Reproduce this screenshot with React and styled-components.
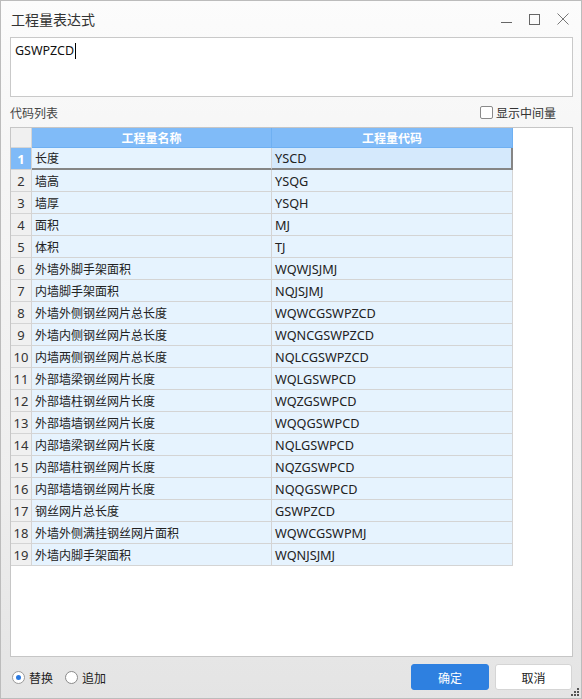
import React from "react";
import styled, { createGlobalStyle } from "styled-components";

const GlobalStyle = createGlobalStyle`
  html, body {
    margin: 0;
    padding: 0;
    background: #ffffff;
  }
  body {
    font-family: "Noto Sans", "Noto Sans CJK SC", sans-serif;
    color: #222;
  }
`;

const Window = styled.div`
  position: relative;
  box-sizing: border-box;
  width: 582px;
  height: 699px;
  border: 1px solid #bcbcbc;
  background: linear-gradient(180deg, #fcfcfc 0%, #f6f6f6 20%, #eeeeee 70%, #e4e4e4 100%);
  display: flex;
  flex-direction: column;
`;

const TitleBar = styled.div`
  height: 37px;
  display: flex;
  align-items: center;
  justify-content: space-between;
  padding: 0 12px 0 10px;
`;

const Title = styled.span`
  font-family: "Noto Sans CJK SC", sans-serif;
  font-size: 14px;
  color: #333;
`;

const Controls = styled.div`
  display: flex;
  align-items: center;
  gap: 17px;
`;

const Body = styled.div`
  flex: 1;
  display: flex;
  flex-direction: column;
  padding: 0 8px 0 9px;
`;

const Editor = styled.div`
  box-sizing: border-box;
  height: 60px;
  border: 1px solid #c9c9c9;
  background: #fff;
  padding: 5px 4px;
  font-size: 12.5px;
  line-height: 16px;
  color: #111;
  display: flex;
  align-items: flex-start;
`;

const Caret = styled.span`
  display: inline-block;
  width: 1px;
  height: 16px;
  margin-left: 1px;
  background: #000;
`;

const ListBar = styled.div`
  height: 30px;
  display: flex;
  align-items: center;
  justify-content: space-between;
  padding-right: 17px;
`;

const Label = styled.span`
  font-family: "Noto Sans CJK SC", sans-serif;
  font-size: 12px;
  color: #444;
`;

const Check = styled.label`
  display: flex;
  align-items: center;
  gap: 3px;
  font-family: "Noto Sans CJK SC", sans-serif;
  font-size: 12px;
  color: #333;
`;

const CheckBox = styled.span`
  box-sizing: border-box;
  width: 13px;
  height: 13px;
  border: 1px solid #8a8a8a;
  border-radius: 2px;
  background: #fff;
`;

const GridBox = styled.div`
  box-sizing: border-box;
  height: 530px;
  border: 1px solid #c6c6c6;
  background: #fff;
`;

const GridRow = styled.div`
  display: grid;
  grid-template-columns: 21px 240px 241px;
  height: ${({ head }) => (head ? "20px" : "22px")};
`;

const HeadCell = styled.div`
  box-sizing: border-box;
  border-right: 1px solid ${({ corner }) => (corner ? "#d6d6d6" : "#6fb0f2")};
  border-bottom: 1px solid ${({ corner }) => (corner ? "#d6d6d6" : "#6fb0f2")};
  background: ${({ corner }) => (corner ? "#f0f0f0" : "#80bbf8")};
  color: #fff;
  font-family: "Noto Sans CJK SC", sans-serif;
  font-weight: bold;
  font-size: 12px;
  display: flex;
  align-items: center;
  justify-content: center;
`;

const NumCell = styled.div`
  box-sizing: border-box;
  border-right: 1px solid #d4d4d4;
  border-bottom: 1px solid #d4d4d4;
  background: ${({ active }) => (active ? "#7fbaf7" : "#f0f0f0")};
  color: ${({ active }) => (active ? "#fff" : "#333")};
  font-weight: ${({ active }) => (active ? "bold" : "normal")};
  font-size: 13px;
  display: flex;
  align-items: center;
  justify-content: center;
`;

const Cell = styled.div`
  box-sizing: border-box;
  border-right: ${({ active, last }) => (active && last ? "2px solid #858585" : "1px solid #d4d4d4")};
  border-bottom: ${({ active }) => (active ? "2px solid #858585" : "1px solid #d4d4d4")};
  background: ${({ active, last }) => (active && last ? "#d5e9fc" : "#e6f3fe")};
  color: #222;
  font-family: "Noto Sans", "Noto Sans CJK SC", sans-serif;
  font-size: ${({ last }) => (last ? "12.7px" : "12px")};
  padding-left: ${({ last }) => (last ? "3px" : "3px")};
  display: flex;
  align-items: center;
  white-space: nowrap;
`;

const Footer = styled.div`
  height: 40px;
  display: flex;
  align-items: center;
  justify-content: space-between;
  padding-bottom: 1px;
`;

const RadioGroup = styled.div`
  display: flex;
  align-items: center;
  gap: 12px;
  padding-left: 2px;
`;

const Radio = styled.label`
  display: flex;
  align-items: center;
  gap: 4px;
  font-family: "Noto Sans CJK SC", sans-serif;
  font-size: 12px;
  color: #222;
`;

const RadioDot = styled.span`
  box-sizing: border-box;
  width: 13px;
  height: 13px;
  border-radius: 50%;
  border: 1px solid ${({ on }) => (on ? "#9a9a9a" : "#8a8a8a")};
  background: #fff;
  display: flex;
  align-items: center;
  justify-content: center;
  &::after {
    content: "";
    width: 5px;
    height: 5px;
    border-radius: 50%;
    background: ${({ on }) => (on ? "#2a79e0" : "transparent")};
  }
`;

const Buttons = styled.div`
  display: flex;
  gap: 6px;
  margin-right: 1px;
`;

const Button = styled.button`
  box-sizing: border-box;
  width: ${({ primary }) => (primary ? "78px" : "77px")};
  height: 26px;
  border-radius: 3px;
  border: 1px solid ${({ primary }) => (primary ? "#2e80e0" : "#d5d5d5")};
  background: ${({ primary }) => (primary ? "#2e80e0" : "#fff")};
  color: ${({ primary }) => (primary ? "#fff" : "#222")};
  font-family: "Noto Sans CJK SC", sans-serif;
  font-size: 12px;
  padding: 0;
`;

const Grip = styled.svg`
  position: absolute;
  right: 1px;
  bottom: 1px;
`;

const rows = [
  ["长度", "YSCD"],
  ["墙高", "YSQG"],
  ["墙厚", "YSQH"],
  ["面积", "MJ"],
  ["体积", "TJ"],
  ["外墙外脚手架面积", "WQWJSJMJ"],
  ["内墙脚手架面积", "NQJSJMJ"],
  ["外墙外侧钢丝网片总长度", "WQWCGSWPZCD"],
  ["外墙内侧钢丝网片总长度", "WQNCGSWPZCD"],
  ["内墙两侧钢丝网片总长度", "NQLCGSWPZCD"],
  ["外部墙梁钢丝网片长度", "WQLGSWPCD"],
  ["外部墙柱钢丝网片长度", "WQZGSWPCD"],
  ["外部墙墙钢丝网片长度", "WQQGSWPCD"],
  ["内部墙梁钢丝网片长度", "NQLGSWPCD"],
  ["内部墙柱钢丝网片长度", "NQZGSWPCD"],
  ["内部墙墙钢丝网片长度", "NQQGSWPCD"],
  ["钢丝网片总长度", "GSWPZCD"],
  ["外墙外侧满挂钢丝网片面积", "WQWCGSWPMJ"],
  ["外墙内脚手架面积", "WQNJSJMJ"],
];

const App = () => {
  return (
    <>
      <GlobalStyle />
      <Window>
        <TitleBar>
          <Title>工程量表达式</Title>
          <Controls>
            <svg width="11" height="11" viewBox="0 0 11 11">
              <line x1="0" y1="8.5" x2="11" y2="8.5" stroke="#666" strokeWidth="1" />
            </svg>
            <svg width="11" height="11" viewBox="0 0 11 11">
              <rect x="0.5" y="0.5" width="10" height="10" fill="none" stroke="#666" strokeWidth="1" />
            </svg>
            <svg width="12" height="12" viewBox="0 0 12 12">
              <path d="M0.5 0.5 L11.5 11.5 M11.5 0.5 L0.5 11.5" stroke="#777" strokeWidth="1" />
            </svg>
          </Controls>
        </TitleBar>
        <Body>
          <Editor>
            GSWPZCD
            <Caret />
          </Editor>
          <ListBar>
            <Label>代码列表</Label>
            <Check>
              <CheckBox />
              显示中间量
            </Check>
          </ListBar>
          <GridBox>
            <GridRow head>
              <HeadCell corner />
              <HeadCell>工程量名称</HeadCell>
              <HeadCell>工程量代码</HeadCell>
            </GridRow>
            {rows.map(([name, code], i) => (
              <GridRow key={code}>
                <NumCell active={i === 0}>{i + 1}</NumCell>
                <Cell active={i === 0}>{name}</Cell>
                <Cell active={i === 0} last>
                  {code}
                </Cell>
              </GridRow>
            ))}
          </GridBox>
          <Footer>
            <RadioGroup>
              <Radio>
                <RadioDot on />
                替换
              </Radio>
              <Radio>
                <RadioDot />
                追加
              </Radio>
            </RadioGroup>
            <Buttons>
              <Button primary>确定</Button>
              <Button>取消</Button>
            </Buttons>
          </Footer>
        </Body>
        <Grip width="10" height="10" viewBox="0 0 10 10">
          <rect x="7" y="1" width="2" height="2" fill="#555" />
          <rect x="4" y="4" width="2" height="2" fill="#555" />
          <rect x="7" y="4" width="2" height="2" fill="#555" />
          <rect x="1" y="7" width="2" height="2" fill="#555" />
          <rect x="4" y="7" width="2" height="2" fill="#555" />
          <rect x="7" y="7" width="2" height="2" fill="#555" />
        </Grip>
      </Window>
    </>
  );
};

export default App;
